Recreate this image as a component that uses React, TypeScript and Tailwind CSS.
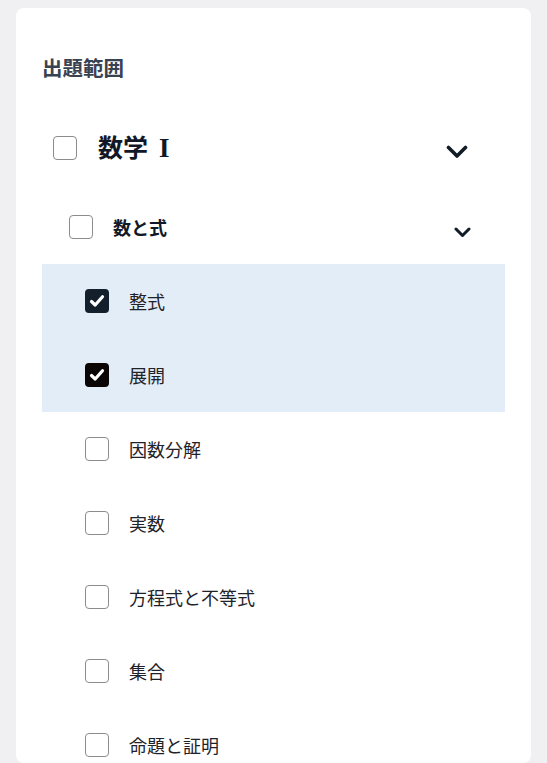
import React, { useState } from 'react';

type Leaf = { id: string; label: string };

const LEAVES: Leaf[] = [
  { id: 'seishiki', label: '整式' },
  { id: 'tenkai', label: '展開' },
  { id: 'insubunkai', label: '因数分解' },
  { id: 'jissu', label: '実数' },
  { id: 'houteishiki', label: '方程式と不等式' },
  { id: 'shugo', label: '集合' },
  { id: 'meidai', label: '命題と証明' },
];

function Box({ checked, dark, onClick }: { checked: boolean; dark?: boolean; onClick?: () => void }) {
  return (
    <button
      onClick={onClick}
      className={`w-6 h-6 shrink-0 rounded-[4px] flex items-center justify-center ${
        checked ? (dark ? 'bg-[#0b0606]' : 'bg-[#131f2b]') : 'border-[1.5px] border-[#8c8c8c] bg-white'
      }`}
    >
      {checked && (
        <svg width="16" height="16" viewBox="0 0 16 16">
          <path d="M2.5 8.5 L6.2 12 L13.5 3.8" fill="none" stroke="white" strokeWidth="3.2" strokeLinecap="round" strokeLinejoin="round" />
        </svg>
      )}
    </button>
  );
}

function Chevron({ size }: { size: 'lg' | 'sm' }) {
  if (size === 'lg') {
    return (
      <svg width="22" height="14" viewBox="0 0 22 14">
        <polyline points="2.5,2.5 11,11 19.5,2.5" fill="none" stroke="#111c27" strokeWidth="3.6" strokeLinecap="round" strokeLinejoin="round" />
      </svg>
    );
  }
  return (
    <svg width="17" height="11" viewBox="0 0 17 11">
      <polyline points="2,2 8.5,8.5 15,2" fill="none" stroke="#111c27" strokeWidth="3" strokeLinecap="round" strokeLinejoin="round" />
    </svg>
  );
}

export default function App() {
  const [checked, setChecked] = useState<Record<string, boolean>>({ seishiki: true, tenkai: true });

  const toggle = (id: string) => setChecked((prev) => ({ ...prev, [id]: !prev[id] }));

  return (
    <div
      className="min-h-[763px] bg-[#f0f0f3] pt-2 px-4"
      style={{ fontFamily: '"Noto Sans CJK JP", "Noto Sans", sans-serif' }}
    >
      <div className="bg-white rounded-lg px-[26px] pt-[45px] pb-4 h-[755px] overflow-hidden">
        <h3 className="text-[20.5px] leading-7 font-bold text-[#394250]">出題範囲</h3>

        {/* 科目 */}
        <div className="mt-[30px] h-[74px] flex items-center pl-[11px] pr-[37px]">
          <Box checked={false} />
          <span className="ml-[21px] text-[25px] font-bold text-[#111827] flex items-baseline">
            数学
            <span className="ml-[11px] text-[27px] font-['Liberation_Serif',serif]">I</span>
          </span>
          <div className="ml-auto pt-2">
            <Chevron size="lg" />
          </div>
        </div>

        {/* 単元 */}
        <div className="pt-[5px]">
          <div className="h-[74px] flex items-center pl-[27px] pr-[34px]">
            <Box checked={false} />
            <span className="ml-5 text-lg font-bold text-[#111827]">数と式</span>
            <div className="ml-auto pt-[10px]">
              <Chevron size="sm" />
            </div>
          </div>
        </div>

        {/* 項目 */}
        <div className="flex flex-col">
          {LEAVES.map((leaf, i) => (
            <div
              key={leaf.id}
              className={`h-[74px] flex items-center pl-[43px] ${checked[leaf.id] ? 'bg-[#e3edf8]' : ''}`}
            >
              <Box checked={!!checked[leaf.id]} dark={i === 1} onClick={() => toggle(leaf.id)} />
              <span className="ml-5 text-lg text-[#1f2329]">{leaf.label}</span>
            </div>
          ))}
        </div>
      </div>
    </div>
  );
}
